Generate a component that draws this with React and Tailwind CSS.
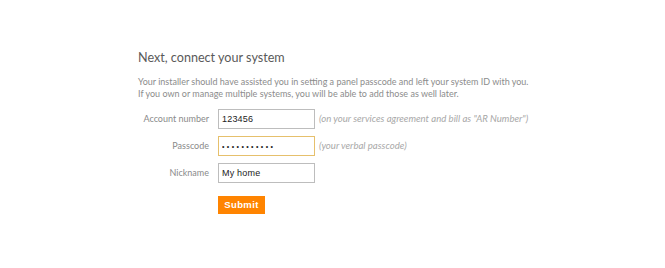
import React from 'react';

const Field = ({ label, value, type = "text", hint, focused }) => (
    <div className="flex items-center">
        <label className="w-[72px] text-right text-[9px] text-[#8a8a8a] pr-[1px]">{label}</label>
        <input
            type={type}
            defaultValue={value}
            className={`ml-[8px] w-[97px] h-[20px] border bg-white px-[3px] text-[#222] font-['Liberation_Sans',sans-serif] outline-none ${type === 'password' ? 'text-[7px] tracking-[2.4px]' : 'text-[9px] tracking-[0.2px]'} ${focused ? 'border-[#e6c06c]' : 'border-[#bdbdbd]'}`}
        />
        {hint && <span className="ml-[4px] text-[9.6px] italic text-[#a8a8a8]">{hint}</span>}
    </div>
);

export default function App() {
    return (
        <div className="w-[665px] h-[268px] bg-white font-['Lato',sans-serif] pl-[138px] pt-[50px]">
            {/* Heading */}
            <h2 className="text-[12.6px] text-[#5a5a5a] leading-[16px]">Next, connect your system</h2>
            <p className="mt-[10px] text-[9px] leading-[12px] text-[#8c8c8c]">
                Your installer should have assisted you in setting a panel passcode and left your system ID with you.<br />
                If you own or manage multiple systems, you will be able to add those as well later.
            </p>

            {/* Form */}
            <form className="mt-[9px] flex flex-col gap-[7px]" onSubmit={(e) => e.preventDefault()}>
                <Field label="Account number" value="123456" hint={'(on your services agreement and bill as "AR Number")'} />
                <Field label="Passcode" value="passcode123" type="password" hint="(your verbal passcode)" focused />
                <Field label="Nickname" value="My home" />
                <div className="flex pl-[80px] mt-[6px]">
                    <button type="submit" className="w-[47px] h-[18px] bg-[#ff8400] text-white text-[9.5px] font-bold font-['Liberation_Sans',sans-serif] tracking-[0.4px]">
                        Submit
                    </button>
                </div>
            </form>
        </div>
    );
}
